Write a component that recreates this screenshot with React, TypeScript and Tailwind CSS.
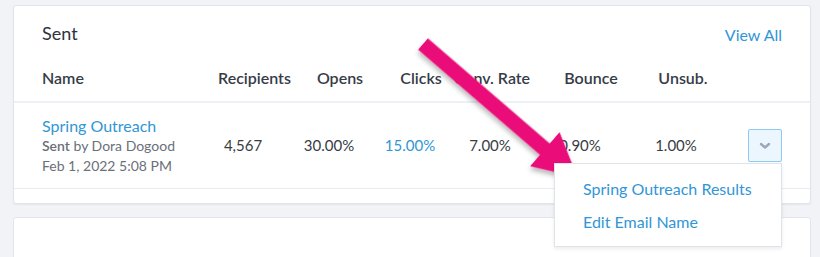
import React from 'react';

const cols = 'grid grid-cols-[158px_86px_86px_76px_84px_96px_96px_1fr]';

const headers = [
  { label: 'Recipients', pad: 'pl-[18px]' },
  { label: 'Opens', pad: 'pl-[22px]' },
  { label: 'Clicks', pad: 'pl-[22px]' },
  { label: 'Conv. Rate', pad: 'pl-[4px]' },
  { label: 'Bounce', pad: 'pl-[22px]' },
  { label: 'Unsub.', pad: 'pl-[14px]' },
];

const Chevron = () => (
  <svg width="12" height="8" viewBox="0 0 12 8" fill="none">
    <path d="M2 2l4 3.5L10 2" stroke="#9ea6b8" strokeWidth="2.4" strokeLinecap="round" strokeLinejoin="round" />
  </svg>
);

const Arrow = () => {
  // shaft from start point toward the menu, with a triangle head
  const L = 204;
  const H = 43;
  return (
    <svg className="absolute inset-0 pointer-events-none" width="820" height="257">
      <defs>
        <filter id="sh" x="-20%" y="-20%" width="140%" height="140%">
          <feDropShadow dx="2" dy="3" stdDeviation="2.5" floodColor="#000" floodOpacity="0.28" />
        </filter>
      </defs>
      <g transform="translate(423 44) rotate(40.8)" filter="url(#sh)">
        <polygon
          points={`0,-7.5 ${L - H},-7.5 ${L - H},-22.5 ${L},0 ${L - H},22.5 ${L - H},7.5 0,7.5`}
          fill="#ea1179"
        />
      </g>
    </svg>
  );
};

export default function App() {
  return (
    <div
      className="relative w-[820px] h-[257px] overflow-hidden bg-[#f1f3f6] pt-[5px] pl-[13px] pr-[9px]"
      style={{ fontFamily: 'Lato, "Open Sans", sans-serif' }}
    >
      <div className="bg-white border border-[#e2e6ec] rounded-[3px] shadow-[0_1px_2px_rgba(0,0,0,0.06)]">
        {/* title */}
        <div className="h-[55px] px-[28px] flex items-center justify-between">
          <h2 className="text-[18px] text-[#2d323c]">Sent</h2>
          <a className="text-[16px] text-[#3196d6] pt-[2px]">View All</a>
        </div>

        {/* column headers */}
        <div className={`${cols} px-[28px] pt-[7px] h-[42px] border-b-2 border-[#edf0f4] text-[16px] font-semibold text-[#363b48] leading-[20px]`}>
          <div>Name</div>
          {headers.map((h) => (
            <div key={h.label} className={`text-center whitespace-nowrap ${h.pad}`}>{h.label}</div>
          ))}
          <div />
        </div>

        {/* row */}
        <div className={`${cols} px-[28px] h-[86px] items-center border-b border-[#e8ebf0] text-[15px] text-[#383c45]`}>
          <div className="leading-[20px]">
            <div className="text-[#3196d6] text-[16px]">Spring Outreach</div>
            <div className="text-[14px] text-[#6a707a] whitespace-nowrap">
              <span className="font-semibold">Sent</span> by Dora Dogood
            </div>
            <div className="text-[14px] text-[#6a707a] whitespace-nowrap">Feb 1, 2022 5:08 PM</div>
          </div>
          <div className="text-center">4,567</div>
          <div className="text-center">30.00%</div>
          <div className="text-center text-[#3196d6]">15.00%</div>
          <div className="text-center">7.00%</div>
          <div className="text-center">0.90%</div>
          <div className="text-center">1.00%</div>
          <div className="relative flex justify-end">
            <button className="w-[34px] h-[33px] flex items-center justify-center bg-[#ebf6fe] border border-[#8fcaee] rounded-[2px]">
              <Chevron />
            </button>
            <div className="absolute right-0 top-[34px] w-[228px] bg-white border border-[#dfe4ea] shadow-[0_2px_4px_rgba(0,0,0,0.08)] py-[8px] z-10">
              <div className="h-[33px] flex items-center pl-[28px] text-[16px] text-[#3196d6] whitespace-nowrap">Spring Outreach Results</div>
              <div className="h-[33px] flex items-center pl-[28px] text-[16px] text-[#3196d6] whitespace-nowrap">Edit Email Name</div>
            </div>
          </div>
        </div>
        <div className="h-[14px]" />
      </div>

      <div className="mt-[13px] h-[60px] bg-white border border-[#e2e6ec] rounded-[3px]" />

      <Arrow />
    </div>
  );
}
